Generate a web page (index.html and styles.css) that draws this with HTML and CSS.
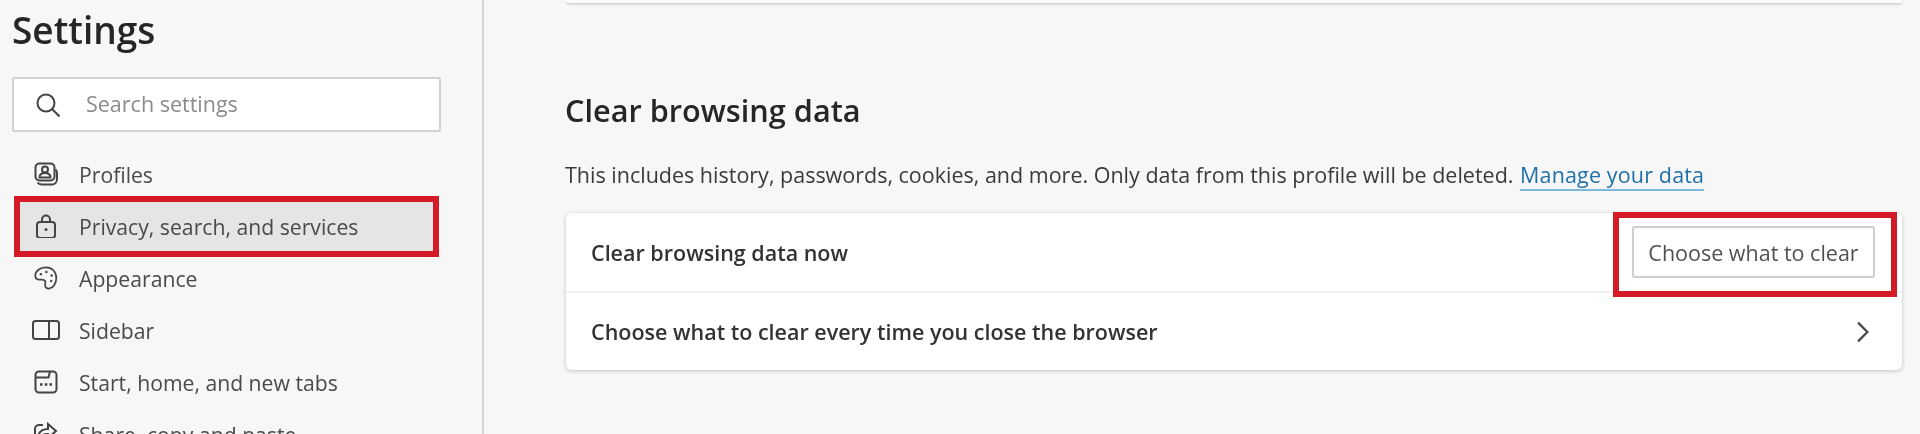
FILE: index.html
```html
<!DOCTYPE html>
<html lang="en">
<head>
<meta charset="utf-8">
<title>Settings</title>
<link rel="stylesheet" href="styles.css">
</head>
<body>
<div class="page">
  <aside class="sidebar">
    <h1 class="title">Settings</h1>
    <div class="search">
      <svg class="search-icon" viewBox="0 0 24 24"><circle cx="10" cy="10" r="8.500"/><path d="M16 16l7.500 7.500"/></svg>
      <span class="placeholder">Search settings</span>
    </div>
    <nav class="nav">
      <a class="nav-item"><svg class="nav-icon" viewBox="0 0 24 24"><rect x="1.500" y="1.500" width="19" height="17" rx="4"/><circle cx="11" cy="7.500" r="3"/><path d="M5.500 15.500c0-3 2-4.500 5.500-4.500s5.500 1.500 5.500 4.500zM21.500 7.500c1 1 1.500 2 1.500 3.500v6c0 3-2 5.500-5 5.500H8c-2 0-3.500-.5-4.500-2"/></svg><span>Profiles</span></a>
      <a class="nav-item active"><svg class="nav-icon" viewBox="0 0 24 24"><rect x="3" y="8" width="18" height="16" rx="3"/><path d="M8 8V5.500a4 4 0 0 1 8 0V8"/><circle class="dot" cx="12" cy="15.500" r="1.500"/></svg><span>Privacy, search, and services</span></a>
      <a class="nav-item"><svg class="nav-icon wide" viewBox="0 0 28 28"><path d="M14 1.500C7 1.500 1.500 6 1.500 11c0 3 2 5 5 5 3 0 5.500-.5 6.500 1.500s-1 4.500.5 7 3 2 5 1.500c4-1 7.500-5.500 7.500-12C26 6.500 21 1.500 14 1.500z"/><circle class="dot" cx="8" cy="9.500" r="1.400"/><circle class="dot" cx="14.500" cy="7" r="1.400"/><circle class="dot" cx="20.500" cy="11" r="1.400"/><circle class="dot" cx="20" cy="17.500" r="1.400"/></svg><span>Appearance</span></a>
      <a class="nav-item"><svg class="nav-icon wide" viewBox="0 0 28 20"><rect x="1" y="1" width="26" height="18" rx="2.500"/><path d="M17 1v18"/></svg><span>Sidebar</span></a>
      <a class="nav-item"><svg class="nav-icon" viewBox="0 0 24 24"><rect x="1.500" y="1.500" width="21" height="21" rx="3.500"/><path d="M1.500 7.500h13l1.500-6"/><path class="dots" d="M6 14.500h2.500M10.800 14.500h2.500M15.500 14.500h2.500"/></svg><span>Start, home, and new tabs</span></a>
      <a class="nav-item"><svg class="nav-icon" viewBox="0 0 24 24"><path d="M14 2l8 7-8 7v-4c-5 0-8 1-10 5 0-6 3-10 10-10zM9 3H5a4 4 0 0 0-4 4v12a4 4 0 0 0 4 4h12a4 4 0 0 0 4-4v-3"/></svg><span>Share, copy and paste</span></a>
    </nav>
  </aside>
  <main class="content">
    <div class="prev-card"></div>
    <h2 class="heading">Clear browsing data</h2>
    <p class="desc">This includes history, passwords, cookies, and more. Only data from this profile will be deleted. <a class="link">Manage your data</a></p>
    <section class="card">
      <div class="row">
        <span class="row-label">Clear browsing data now</span>
        <button class="btn">Choose what to clear</button>
      </div>
      <div class="row row-next">
        <span class="row-label">Choose what to clear every time you close the browser</span>
        <svg class="chevron" viewBox="0 0 12 20"><path d="M1.500 1.500L10 10l-8.500 8.500"/></svg>
      </div>
    </section>
  </main>
  <div class="mark mark-nav"></div>
  <div class="mark mark-btn"></div>
</div>
</body>
</html>
```

FILE: styles.css
```css
* { box-sizing: border-box; }
html, body { margin: 0; height: 434px; overflow: hidden; }
body { background: #f7f7f7; font-family: "Open Sans", "Noto Sans", sans-serif; color: #2b2b2b; }
.page { position: relative; display: flex; width: 1920px; height: 434px; overflow: hidden; filter: blur(.4px); }

.sidebar { flex: 0 0 484px; height: 434px; padding: 0 41px 0 12px; border-right: 2px solid #d4d4d4; }
.title { margin: 7px 0 0; font-size: 37px; line-height: 46px; font-weight: 600; color: #262626; }
.search { display: flex; align-items: center; height: 55px; margin-top: 24px; padding-left: 22px; background: #fff; border: 2px solid #d2d2d2; border-radius: 2px; }
.search-icon { width: 24px; height: 24px; fill: none; stroke: #444; stroke-width: 2; }
.placeholder { margin-left: 26px; font-size: 21.500px; color: #8b8b8b; position: relative; top: -1px; }

.nav { margin-top: 16px; }
.nav-item { display: flex; align-items: center; height: 52px; padding-left: 22px; font-size: 21.200px; color: #4a4a4a; }
.nav-item span { margin-left: 21px; white-space: nowrap; }
.nav-item.active { background: #e5e5e5; margin: 0 2px; padding-left: 20px; }
.nav-icon { flex: none; width: 24px; height: 24px; fill: none; stroke: #444; stroke-width: 2; }
.nav-icon.wide { width: 28px; margin-left: -2px; }
.nav-icon.wide + span { margin-left: 19px; }
.nav-icon .dot { fill: #444; stroke: none; }
.nav-icon .dots { stroke-width: 2.500; }

.content { flex: 1; padding: 0 18px 0 82px; min-width: 0; }
.prev-card { height: 3px; background: #fff; border-radius: 0 0 6px 6px; box-shadow: 0 1px 3px rgba(0, 0, 0, .25); }
.heading { margin: 87px 0 0 -1px; font-size: 30.700px; line-height: 40px; font-weight: 600; color: #262626; }
.desc { margin: 31px 0 0 -1px; font-size: 21.500px; line-height: 28px; color: #3a3a3a; white-space: nowrap; }
.link { margin-left: 1px; color: #1f6fa8; border-bottom: 2px solid #7db8e0; letter-spacing: .15px; }
.card { margin-top: 24px; height: 157px; background: #fff; border-radius: 6px; box-shadow: 0 1px 4px rgba(0, 0, 0, .22); }
.row { display: flex; align-items: center; justify-content: space-between; height: 78px; padding: 0 27px 0 25px; }
.row-next { height: 79px; border-top: 2px solid #f0f0f0; padding-right: 32px; }
.row-label { font-size: 21.500px; font-weight: 600; color: #333; }
.btn { width: 243px; height: 52px; padding: 0; background: #fff; border: 2px solid #cfcfcf; border-radius: 3px; font: inherit; font-size: 21.500px; color: #505050; }
.chevron { width: 14px; height: 22px; fill: none; stroke: #444; stroke-width: 2; }

.mark { position: absolute; border: 6px solid #d41a26; }
.mark-nav { left: 14px; top: 196px; width: 425px; height: 61px; }
.mark-btn { left: 1613px; top: 212px; width: 284px; height: 85px; }
```
